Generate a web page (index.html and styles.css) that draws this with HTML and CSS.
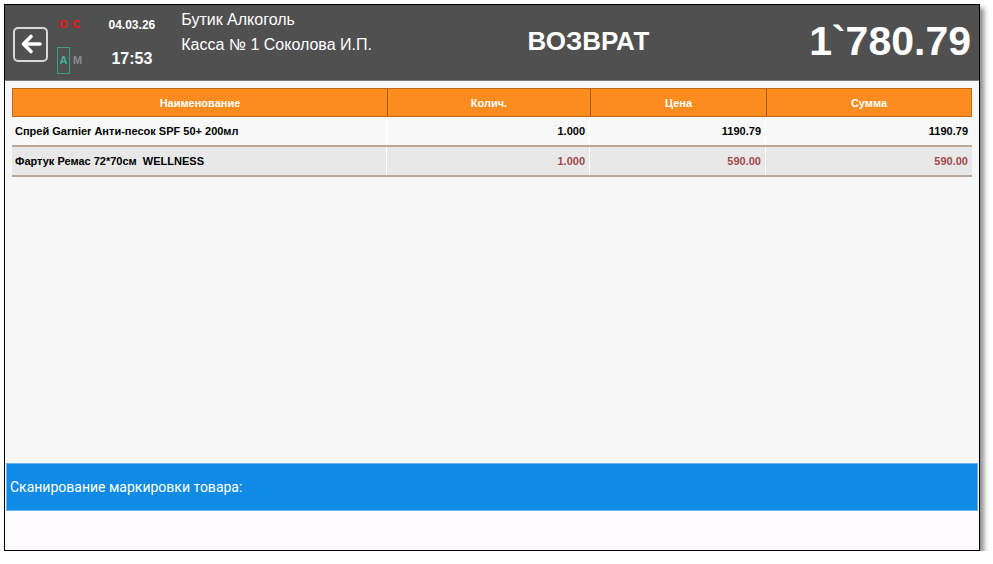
FILE: index.html
```html
<!DOCTYPE html>
<html lang="ru">
<head>
    <meta charset="UTF-8">
    <meta name="viewport" content="width=device-width, initial-scale=1.0">
    <title>Возврат</title>

    <link rel="stylesheet" href="styles.css">
</head>

<body>
    <div class="window">
        <div class="header">
            <div class="backButton">
                <svg width="24" height="24" viewBox="0 0 24 24">
                    <path d="M21 12 H4.5 M12 4.5 L4.5 12 L12 19.5" stroke="#fff" stroke-width="3.6" fill="none" stroke-linecap="round" stroke-linejoin="round"/>
                </svg>
            </div>
            <div class="flags">
                <div class="flagsTop"><span>О</span><span>С</span></div>
                <div class="flagsBottom"><span class="flagA">А</span><span class="flagM">М</span></div>
            </div>
            <div class="dateTime">
                <div class="date">04.03.26</div>
                <div class="time">17:53</div>
            </div>
            <div class="shop">
                <div class="shopName">Бутик Алкоголь</div>
                <div class="cashier">Касса № 1 Соколова И.П.</div>
            </div>
            <div class="mode">ВОЗВРАТ</div>
            <div class="total">1`780.79</div>
        </div>

        <div class="main">
            <div class="tableHead">
                <div class="cell colName">Наименование</div>
                <div class="cell colQty">Колич.</div>
                <div class="cell colPrice">Цена</div>
                <div class="cell colSum">Сумма</div>
            </div>
            <div class="row">
                <div class="cell colName">Спрей Garnier Анти-песок SPF 50+ 200мл</div>
                <div class="cell colQty">1.000</div>
                <div class="cell colPrice">1190.79</div>
                <div class="cell colSum">1190.79</div>
            </div>
            <div class="row rowSelected">
                <div class="cell colName">Фартук Ремас 72*70см&nbsp; WELLNESS</div>
                <div class="cell colQty">1.000</div>
                <div class="cell colPrice">590.00</div>
                <div class="cell colSum">590.00</div>
            </div>
        </div>

        <div class="scanBar">Сканирование маркировки товара:</div>
        <div class="footer"></div>
    </div>
</body>

</html>
```

FILE: styles.css
```css
* {
    margin: 0;
    padding: 0;
    box-sizing: border-box;
}
body {
    background-color: #fff;
    font-family: "Liberation Sans", Arial, sans-serif;
    padding: 4px 0 0 4px;
}
.window {
    width: 976px;
    height: 547px;
    border: 1px solid #000;
    box-shadow: 4px 4px 5px rgba(0, 0, 0, 0.45);
    display: flex;
    flex-direction: column;
    background-color: #f7f7f7;
}
.header {
    height: 76px;
    background-color: #505050;
    border-bottom: 1px solid #7c7c7c;
    display: flex;
    align-items: center;
    color: #fff;
    flex-shrink: 0;
}
.backButton {
    width: 35px;
    height: 35px;
    margin-left: 8px;
    margin-top: 3px;
    border: 2px solid #d8d8d8;
    border-radius: 5px;
    display: flex;
    align-items: center;
    justify-content: center;
}
.flags {
    margin-left: 9px;
    height: 62px;
    display: flex;
    flex-direction: column;
    justify-content: space-between;
    font-size: 11px;
    font-weight: bold;
    padding-top: 6px;
}
.flagsTop span {
    color: #ff1010;
    margin-right: 5px;
}
.flagsTop span:first-child {
    margin-left: 2px;
}
.flagsBottom {
    display: flex;
    align-items: center;
}
.flagA {
    color: #3cb89a;
    border: 1px solid #3a9c80;
    width: 13px;
    height: 27px;
    display: flex;
    align-items: center;
    justify-content: center;
    font-size: 11px;
}
.flagM {
    color: #8c8c8c;
    margin-left: 3px;
    font-size: 11px;
}
.dateTime {
    margin-left: 23px;
    height: 76px;
    display: flex;
    flex-direction: column;
    align-items: center;
    font-weight: bold;
}
.date {
    font-size: 12px;
    margin-top: 13px;
}
.time {
    font-size: 16px;
    margin-top: 18px;
}
.shop {
    margin-left: 26px;
    height: 76px;
    font-size: 16px;
    padding-top: 6px;
}
.cashier {
    margin-top: 7px;
}
.mode {
    flex: 1;
    text-align: center;
    font-size: 26px;
    font-weight: bold;
    padding-left: 74px;
    padding-bottom: 2px;
}
.total {
    font-size: 41px;
    font-weight: bold;
    margin-right: 8px;
    padding-bottom: 2px;
    width: 240px;
    text-align: right;
}
.main {
    height: 382px;
    padding: 7px 7px 0 7px;
    flex-shrink: 0;
}
.tableHead {
    display: flex;
    height: 29px;
    background-color: #fd8c1e;
    border: 1px solid #c0691a;
    color: #fff;
    font-size: 11px;
    font-weight: bold;
}
.tableHead .cell {
    display: flex;
    align-items: center;
    justify-content: center;
    border-left: 1px solid #a25a18;
}
.tableHead .cell:first-child {
    border-left: none;
}
.colName {
    width: 374px;
}
.colQty {
    width: 203px;
}
.colPrice {
    width: 176px;
}
.colSum {
    flex: 1;
}
.row {
    display: flex;
    height: 30px;
    background-color: #f8f8f8;
    border-bottom: 2px solid #bca898;
    font-size: 11px;
    font-weight: bold;
    color: #000;
}
.row .cell {
    display: flex;
    align-items: center;
    justify-content: flex-end;
    padding-right: 4px;
    border-left: 1px solid #fff;
}
.row .colName {
    justify-content: flex-start;
    padding-left: 3px;
    border-left: none;
}
.rowSelected {
    background-color: #e8e8e8;
}
.rowSelected .colQty,
.rowSelected .colPrice,
.rowSelected .colSum {
    color: #a2494c;
}
.scanBar {
    height: 48px;
    margin: 0 1px;
    background-color: #108be5;
    border: 1px solid #6cb6ec;
    color: #fff;
    font-family: Roboto, "Liberation Sans", sans-serif;
    font-size: 14px;
    display: flex;
    align-items: center;
    padding-left: 3px;
    flex-shrink: 0;
}
.footer {
    flex: 1;
    background-color: #fdfbff;
}
```
